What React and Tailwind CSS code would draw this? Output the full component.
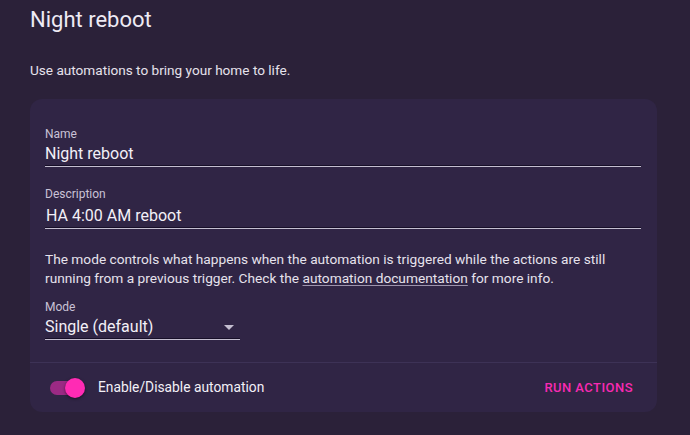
import React from 'react';

const Field = ({ label, value, className = '', gap = 'mt-[2px]' }) => (
  <div className={className}>
    <div className="h-4 text-[12px] leading-4 text-[#c9c2d6]">{label}</div>
    <div className={`${gap} h-5 text-[16px] leading-5 text-[#f3f0f7]`}>{value}</div>
    <div className="mt-[1px] h-px bg-[#170f28]" />
    <div className="h-px bg-[#c4bed0]" />
  </div>
);

const App = () => {
  return (
    <div
      className="min-h-[435px] w-[690px] bg-[#2b2139] pl-[30px] pr-[33px] pt-[6px]"
      style={{ fontFamily: 'Roboto, "Noto Sans", sans-serif' }}
    >
      <h1 className="h-[27px] text-[22px] leading-[27px] text-[#eeeaf4]">Night reboot</h1>
      <p className="mt-[27px] text-[13.6px] leading-5 text-[#e6e2ec]">
        Use automations to bring your home to life.
      </p>

      <div className="mt-[19px] rounded-xl bg-[#302545]">
        <div className="px-[15px] pr-[16px] pt-[27px]">
          <Field label="Name" value="Night reboot" />
          <Field
            className="mt-[19px]"
            gap="mt-[4px]"
            label="Description"
            value={<span className="pl-[1px]">HA 4:00 AM reboot</span>}
          />

          <p className="mt-[21px] text-[13.7px] leading-[19px] text-[#e6e2ec]">
            The mode controls what happens when the automation is triggered while the actions are still
            running from a previous trigger. Check the{' '}
            <a href="#" className="underline underline-offset-2 decoration-[#9d94ad]">
              automation documentation
            </a>{' '}
            for more info.
          </p>

          <div className="mt-[11px] w-[195px]">
            <div className="h-4 text-[12px] leading-4 text-[#c9c2d6]">Mode</div>
            <div className="mt-[2px] flex h-5 items-center justify-between text-[16px] leading-5 text-[#f3f0f7]">
              <span>Single (default)</span>
              <span className="mr-[6px] h-0 w-0 border-x-[5px] border-t-[5px] border-x-transparent border-t-[#c4bed0]" />
            </div>
            <div className="mt-[1px] h-px bg-[#170f28]" />
            <div className="h-px bg-[#c4bed0]" />
          </div>
        </div>

        <div className="mt-[22px] h-px bg-[#3d3256]" />

        <div className="flex h-[49px] items-center justify-between pl-[20px] pr-[24px]">
          <div className="flex items-center">
            <div className="relative h-[14px] w-[32px] rounded-full bg-[#9b2a84]">
              <div className="absolute -right-[3px] top-1/2 h-[20px] w-[20px] -translate-y-1/2 rounded-full bg-[#ff2bb4] shadow-[0_1px_3px_rgba(0,0,0,0.5)]" />
            </div>
            <span className="ml-[16px] text-[13.8px] text-[#f3f0f7]">Enable/Disable automation</span>
          </div>
          <button className="text-[13px] font-medium uppercase tracking-[0.45px] text-[#f72ab2]">
            Run actions
          </button>
        </div>
      </div>
    </div>
  );
};

export default App;
